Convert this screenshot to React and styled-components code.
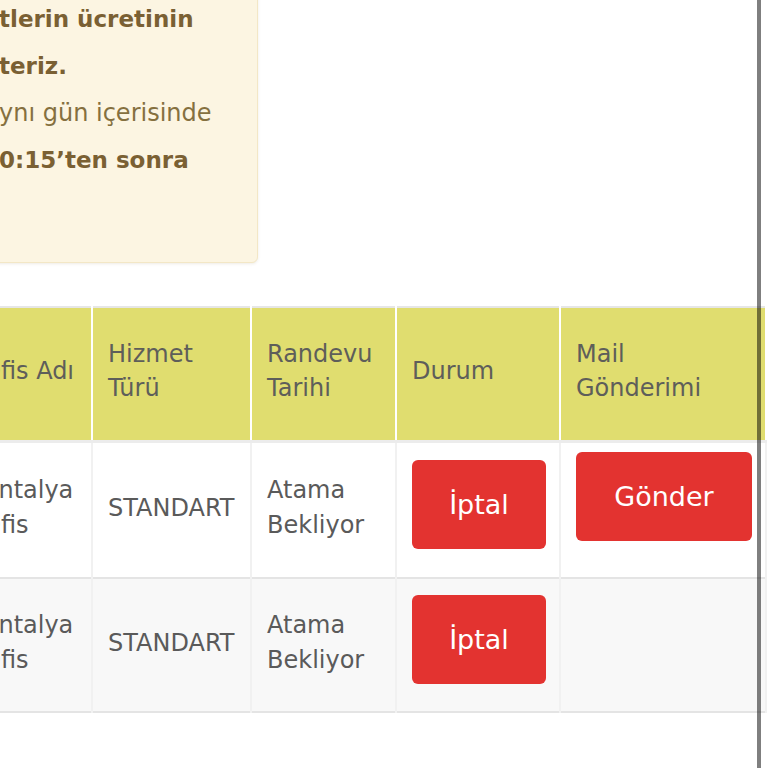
import React from "react";
import styled, { createGlobalStyle } from "styled-components";

const GlobalStyle = createGlobalStyle`
  html, body {
    margin: 0;
    padding: 0;
    background: #ffffff;
  }
  body {
    font-family: "DejaVu Sans", "Open Sans", "Liberation Sans", sans-serif;
    overflow: hidden;
  }
`;

const rows = [
  { office: "Antalya Ofis", service: "STANDART", date: "Atama Bekliyor", mail: true },
  { office: "Antalya Ofis", service: "STANDART", date: "Atama Bekliyor", mail: false },
];

const App = () => {
  return (
    <>
      <GlobalStyle />
      <Page>
        <Notice>
          <Line $bold>tlerin ücretinin</Line>
          <Line $bold>teriz.</Line>
          <Line>ynı gün içerisinde</Line>
          <Line $bold>0:15’ten sonra</Line>
        </Notice>

        <Table>
          <colgroup>
            <col style={{ width: 126 }} />
            <col style={{ width: 159 }} />
            <col style={{ width: 145 }} />
            <col style={{ width: 164 }} />
            <col style={{ width: 206 }} />
          </colgroup>
          <thead>
            <tr>
              <Th>Ofis Adı</Th>
              <Th>Hizmet Türü</Th>
              <Th>Randevu Tarihi</Th>
              <Th>Durum</Th>
              <Th $narrow>Mail Gönderimi</Th>
            </tr>
          </thead>
          <tbody>
            {rows.map((row, i) => (
              <Tr key={i} $striped={i % 2 === 1}>
                <Td>{row.office}</Td>
                <Td>{row.service}</Td>
                <Td>{row.date}</Td>
                <Td>
                  <Button $w={134} $lift={8}>İptal</Button>
                </Td>
                <Td>
                  {row.mail && (
                    <Button $w={176} $lift={24}>Gönder</Button>
                  )}
                </Td>
              </Tr>
            ))}
          </tbody>
        </Table>

        <ScrollEdge />
      </Page>
    </>
  );
};

const Page = styled.div`
  position: relative;
  width: 768px;
  height: 768px;
  overflow: hidden;
`;

const Notice = styled.div`
  width: 258px;
  margin: -20px 0 0 -40px;
  padding: 15px 0 78px 38px;
  background-color: #fcf5e2;
  border: 1px solid #f3e7c6;
  border-radius: 6px;
  box-shadow: 0 1px 3px rgba(120, 100, 50, 0.12);
  color: #80673a;
`;

const Line = styled.div`
  line-height: 47px;
  white-space: nowrap;
  font-size: ${(p) => (p.$bold ? 23 : 24)}px;
  font-weight: ${(p) => (p.$bold ? 700 : 400)};
  color: ${(p) => (p.$bold ? "#7a6033" : "#85703f")};
`;

const Table = styled.table`
  margin: 43px 0 0 -35px;
  width: 800px;
  table-layout: fixed;
  border-collapse: collapse;
  border-top: 2px solid #e6e6e6;
`;

const Th = styled.th`
  height: 126px;
  padding: 0 ${(p) => (p.$narrow ? 40 : 15)}px 6px 15px;
  background-color: #e0dd6f;
  border-left: 2px solid #ffffff;
  border-right: 2px solid #ffffff;
  border-bottom: 3px solid #ececec;
  color: #5e5e5a;
  font-size: 24px;
  font-weight: 400;
  line-height: 34px;
  text-align: left;
  vertical-align: middle;
`;

const Tr = styled.tr`
  height: ${(p) => (p.$striped ? 134 : 136)}px;
  background-color: ${(p) => (p.$striped ? "#f8f8f8" : "#ffffff")};
  border-bottom: 2px solid #e4e4e4;
`;

const Td = styled.td`
  padding: 0 15px 3px;
  border-left: 2px solid #f1f1f1;
  border-right: 2px solid #f1f1f1;
  color: #5a5a5a;
  font-size: 24px;
  line-height: 35px;
  vertical-align: middle;
`;

const Button = styled.button`
  display: block;
  width: ${(p) => p.$w}px;
  height: 89px;
  margin-bottom: ${(p) => p.$lift}px;
  border: none;
  border-radius: 6px;
  background-color: #e33330;
  color: #ffffff;
  font-family: inherit;
  font-size: 27px;
  cursor: pointer;
`;

const ScrollEdge = styled.div`
  position: absolute;
  top: 0;
  bottom: 0;
  left: 757px;
  width: 4px;
  background-color: rgba(0, 0, 0, 0.5);
`;

export default App;
